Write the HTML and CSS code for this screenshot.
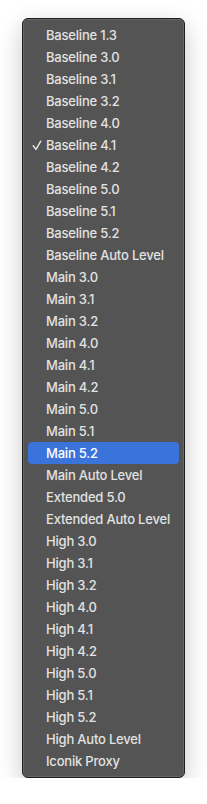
FILE: index.html
```html
<!DOCTYPE html>
<html lang="en">
<head>
    <meta charset="UTF-8">
    <meta name="viewport" content="width=device-width, initial-scale=1.0">
    <title>Level Menu</title>
    <link rel="stylesheet" href="styles.css">
</head>
<body>
    <div class="menu">
        <div class="item">Baseline 1.3</div>
        <div class="item">Baseline 3.0</div>
        <div class="item">Baseline 3.1</div>
        <div class="item">Baseline 3.2</div>
        <div class="item">Baseline 4.0</div>
        <div class="item checked">
            <svg class="check" width="18" height="22" viewBox="0 0 18 22">
                <path d="M5.2 11.8 L8 15.4 L12.8 7.2" fill="none" stroke="#e2e2e2" stroke-width="1.5" stroke-linecap="round" stroke-linejoin="round"/>
            </svg>Baseline 4.1
        </div>
        <div class="item">Baseline 4.2</div>
        <div class="item">Baseline 5.0</div>
        <div class="item">Baseline 5.1</div>
        <div class="item">Baseline 5.2</div>
        <div class="item">Baseline Auto Level</div>
        <div class="item">Main 3.0</div>
        <div class="item">Main 3.1</div>
        <div class="item">Main 3.2</div>
        <div class="item">Main 4.0</div>
        <div class="item">Main 4.1</div>
        <div class="item">Main 4.2</div>
        <div class="item">Main 5.0</div>
        <div class="item">Main 5.1</div>
        <div class="item selected">Main 5.2</div>
        <div class="item">Main Auto Level</div>
        <div class="item">Extended 5.0</div>
        <div class="item">Extended Auto Level</div>
        <div class="item">High 3.0</div>
        <div class="item">High 3.1</div>
        <div class="item">High 3.2</div>
        <div class="item">High 4.0</div>
        <div class="item">High 4.1</div>
        <div class="item">High 4.2</div>
        <div class="item">High 5.0</div>
        <div class="item">High 5.1</div>
        <div class="item">High 5.2</div>
        <div class="item">High Auto Level</div>
        <div class="item">Iconik Proxy</div>
    </div>
</body>
</html>
```

FILE: styles.css
```css
body {
    margin: 0;
    background-color: #ffffff;
    font-family: Inter, "Liberation Sans", sans-serif;
}

/* Popup menu panel */
.menu {
    width: 161px;
    margin: 18px 0 0 22px;
    padding: 5px 0;
    background-color: #545454;
    border: 1px solid #1e1e1e;
    border-radius: 6px;
    box-shadow: inset 0 0 0 1px rgba(255, 255, 255, 0.12), 0 8px 24px rgba(0, 0, 0, 0.22);
}

/* Menu rows */
.item {
    position: relative;
    height: 22px;
    line-height: 22px;
    margin: 0 5px;
    padding-left: 18px;
    border-radius: 4px;
    font-size: 13px;
    font-weight: 500;
    letter-spacing: -0.2px;
    color: #e2e2e2;
    white-space: nowrap;
}

.check {
    position: absolute;
    left: 0;
    top: 0;
}

.selected {
    background-color: #3a73da;
    color: #ffffff;
}
```
